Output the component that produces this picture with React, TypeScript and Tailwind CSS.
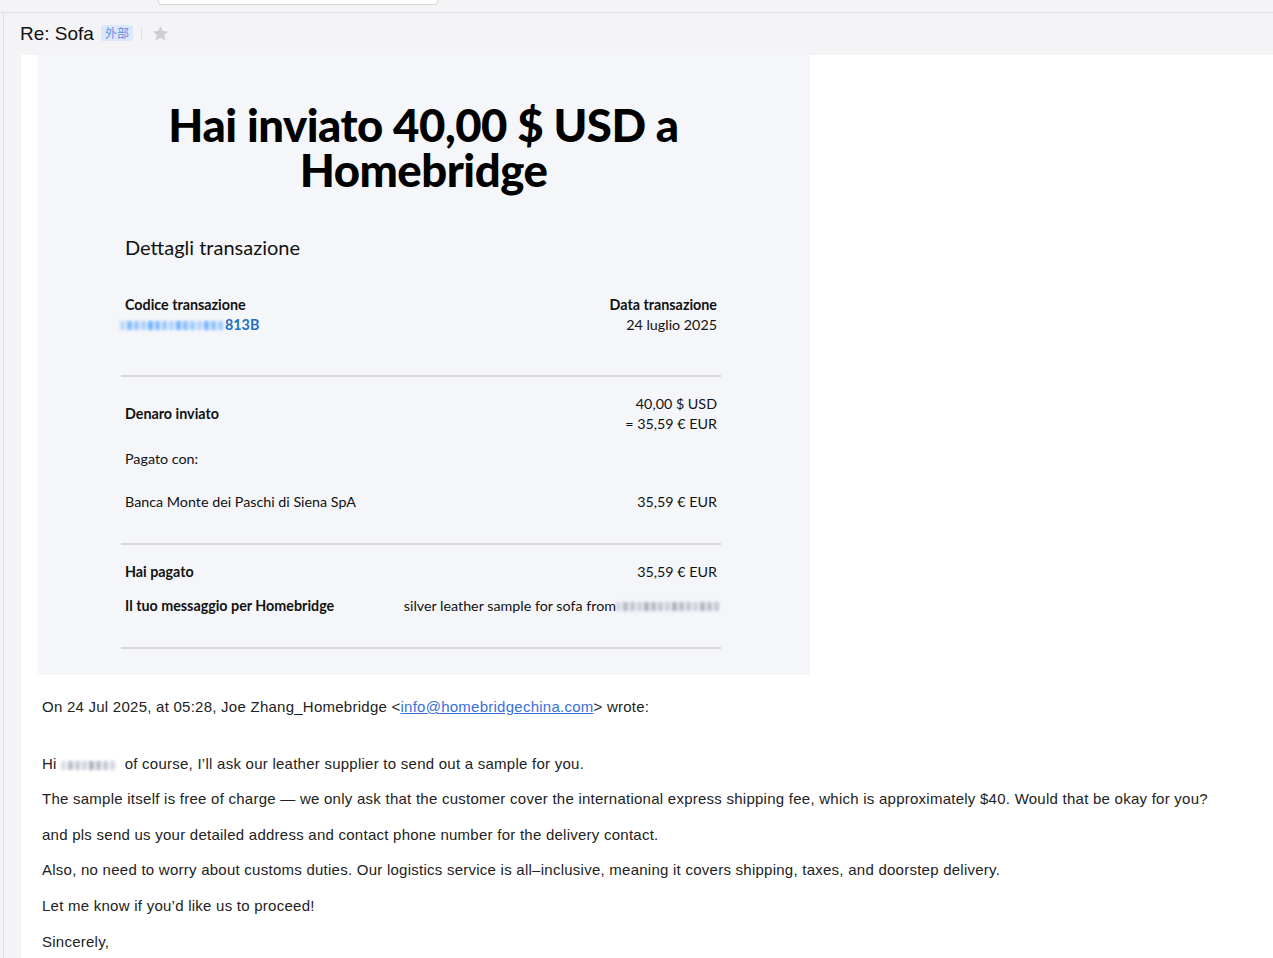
import React from "react";

const Blur = ({ w, color = "bg-gray-400" }: { w: number; color?: string }) => (
  <span className="inline-flex items-center align-middle gap-[2px] blur-[1.5px]" style={{ width: w }}>
    {Array.from({ length: Math.floor(w / 7) }).map((_, i) => (
      <span key={i} className={`${color} inline-block h-[9px] w-[5px]`} style={{ opacity: 0.35 + ((i * 37) % 50) / 100 }} />
    ))}
  </span>
);

const Row = ({ left, right, bold = true }: { left: React.ReactNode; right?: React.ReactNode; bold?: boolean }) => (
  <div className="flex justify-between items-start">
    <div className={bold ? "font-bold" : ""}>{left}</div>
    <div className="text-right">{right}</div>
  </div>
);

export default function App() {
  const receiptFont = { fontFamily: "Lato, 'Noto Sans', sans-serif" };
  return (
    <div className="w-[1273px] h-[958px] overflow-hidden bg-[#f4f4f6] text-black" style={{ fontFamily: "'Liberation Sans', Arial, sans-serif" }}>
      {/* top bar */}
      <div className="h-[13px] border-b border-[#e2e2e6]">
        <div className="ml-[158px] w-[280px] h-[5px] bg-white border border-t-0 border-[#d6d6da] rounded-b-[4px]" />
      </div>
      <div className="ml-[3px] border-l border-[#dcdce0] h-[945px] flex flex-col">
        {/* header */}
        <div className="h-[42px] flex items-center pl-[16px] pb-[2px]">
          <span className="text-[19px] leading-none text-[#111]">Re: Sofa</span>
          <span className="ml-[7px] bg-[#dce7fb] text-[#5f8fe0] text-[12px] leading-none px-[4px] py-[2px] rounded-[2px]" style={{ fontFamily: "'Noto Sans CJK SC', sans-serif" }}>外部</span>
          <span className="ml-[8px] w-px h-[12px] bg-[#e0e0e4]" />
          <svg className="ml-[9px]" width="19" height="19" viewBox="0 0 24 24"><path d="M12 2.5l2.9 6.3 6.9.7-5.2 4.6 1.5 6.8L12 17.4l-6.1 3.5 1.5-6.8L2.2 9.5l6.9-.7z" fill="#cfcfd3" /></svg>
        </div>
        {/* content */}
        <div className="ml-[17px] flex-1 bg-white pl-[16px]">
          <div className="w-[773px] h-[620px] bg-[#f5f6fa] pt-[47px]" style={receiptFont}>
            <h1 className="text-center font-black text-[45.5px] leading-[45px] tracking-[-0.5px] px-[60px]">Hai inviato 40,00 $ USD a Homebridge</h1>
            <div className="ml-[84px] mr-[89px] mt-[42px]">
              <div className="pl-[4px] pr-[4px] text-[14.3px] leading-[20px] text-[#111]">
                <div className="text-[20px] leading-[26px]">Dettagli transazione</div>
                <div className="mt-[35px] flex justify-between">
                  <div>
                    <div className="font-bold">Codice transazione</div>
                    <div className="-ml-[5px] flex items-center text-[#1f6fc5] font-bold">
                      <Blur w={105} color="bg-blue-400" />
                      <span>813B</span>
                    </div>
                  </div>
                  <div className="text-right">
                    <div className="font-bold">Data transazione</div>
                    <div>24 luglio 2025</div>
                  </div>
                </div>
              </div>
              <div className="mt-[40px] h-[2px] bg-[#d6d6da]" />
              <div className="pl-[4px] pr-[4px] text-[14.3px] leading-[20px] text-[#111]">
                <div className="mt-[17px]">
                  <Row left={<div className="pt-[10px]">Denaro inviato</div>} right={<><div>40,00 $ USD</div><div>= 35,59 € EUR</div></>} />
                </div>
                <div className="mt-[15px]">Pagato con:</div>
                <div className="mt-[23px]">
                  <Row bold={false} left="Banca Monte dei Paschi di Siena SpA" right="35,59 € EUR" />
                </div>
              </div>
              <div className="mt-[31px] h-[2px] bg-[#d6d6da]" />
              <div className="pl-[4px] pr-[4px] text-[14.3px] leading-[20px] text-[#111]">
                <div className="mt-[17px]"><Row left="Hai pagato" right="35,59 € EUR" /></div>
                <div className="mt-[14px] flex justify-between">
                  <div className="font-bold">Il tuo messaggio per Homebridge</div>
                  <div className="flex items-center -mr-[4px]">silver leather sample for sofa from<Blur w={105} /></div>
                </div>
              </div>
              <div className="mt-[31px] h-[2px] bg-[#d6d6da]" />
            </div>
          </div>
          <div className="pl-[5px] text-[15px] leading-[20px] text-[#222] tracking-[0.25px]">
            <div className="mt-[22px]">On 24 Jul 2025, at 05:28, Joe Zhang_Homebridge &lt;<span className="text-[#3b6fd8] underline">info@homebridgechina.com</span>&gt; wrote:</div>
            <div className="mt-[37px] flex items-center">Hi <span className="mx-[4px]"><Blur w={60} /></span> of course, I’ll ask our leather supplier to send out a sample for you.</div>
            <div className="mt-[15px]">The sample itself is free of charge — we only ask that the customer cover the international express shipping fee, which is approximately $40. Would that be okay for you?</div>
            <div className="mt-[16px]">and pls send us your detailed address and contact phone number for the delivery contact.</div>
            <div className="mt-[15px]">Also, no need to worry about customs duties. Our logistics service is all–inclusive, meaning it covers shipping, taxes, and doorstep delivery.</div>
            <div className="mt-[16px]">Let me know if you’d like us to proceed!</div>
            <div className="mt-[16px]">Sincerely,</div>
          </div>
        </div>
      </div>
    </div>
  );
}
